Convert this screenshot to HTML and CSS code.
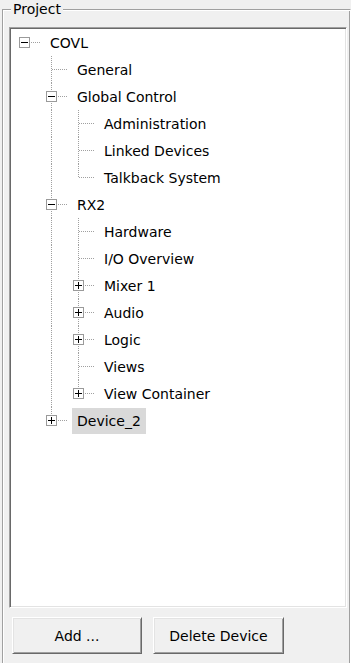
FILE: index.html
```html
<!DOCTYPE html>
<html>
<head>
<meta charset="utf-8">
<title>Project</title>
<link rel="stylesheet" href="styles.css">
</head>
<body>
<div class="group">
  <span class="group-title">Project</span>
  <div class="tree">
    <div class="row"><span class="col own root"><i class="box minus"></i></span><span class="label">COVL</span></div>
    <div class="row"><span class="col"></span><span class="col own mid"></span><span class="label">General</span></div>
    <div class="row"><span class="col"></span><span class="col own mid"><i class="box minus"></i></span><span class="label">Global Control</span></div>
    <div class="row"><span class="col"></span><span class="col v"></span><span class="col own mid"></span><span class="label">Administration</span></div>
    <div class="row"><span class="col"></span><span class="col v"></span><span class="col own mid"></span><span class="label">Linked Devices</span></div>
    <div class="row"><span class="col"></span><span class="col v"></span><span class="col own last"></span><span class="label">Talkback System</span></div>
    <div class="row"><span class="col"></span><span class="col own mid"><i class="box minus"></i></span><span class="label">RX2</span></div>
    <div class="row"><span class="col"></span><span class="col v"></span><span class="col own mid"></span><span class="label">Hardware</span></div>
    <div class="row"><span class="col"></span><span class="col v"></span><span class="col own mid"></span><span class="label">I/O Overview</span></div>
    <div class="row"><span class="col"></span><span class="col v"></span><span class="col own mid"><i class="box plus"></i></span><span class="label">Mixer 1</span></div>
    <div class="row"><span class="col"></span><span class="col v"></span><span class="col own mid"><i class="box plus"></i></span><span class="label">Audio</span></div>
    <div class="row"><span class="col"></span><span class="col v"></span><span class="col own mid"><i class="box plus"></i></span><span class="label">Logic</span></div>
    <div class="row"><span class="col"></span><span class="col v"></span><span class="col own mid"></span><span class="label">Views</span></div>
    <div class="row"><span class="col"></span><span class="col v"></span><span class="col own last"><i class="box plus"></i></span><span class="label">View Container</span></div>
    <div class="row"><span class="col"></span><span class="col own last"><i class="box plus"></i></span><span class="label selected">Device_2</span></div>
  </div>
  <div class="buttons">
    <button class="btn btn-add">Add ...</button>
    <button class="btn btn-delete">Delete Device</button>
  </div>
</div>
</body>
</html>
```
FILE: styles.css
```css
html, body {
  margin: 0;
  padding: 0;
  background: #f0f0f0;
  overflow: hidden;
}
body {
  width: 351px;
  height: 663px;
  font-family: "DejaVu Sans", "Liberation Sans", sans-serif;
  font-size: 14px;
  color: #000;
}
.group {
  position: relative;
  box-sizing: border-box;
  margin: 9px 0 0 2px;
  width: 349px;
  height: 680px;
  border-style: solid;
  border-width: 1px;
  border-color: #a0a0a0 #fff #fff #a0a0a0;
  box-shadow: inset 1px 1px 0 #fff, inset -1px -1px 0 #a0a0a0;
  padding: 1px 3px 0 5px;
}
.group-title {
  position: absolute;
  top: -10px;
  left: 8px;
  padding: 0 2px;
  line-height: 18px;
  background: #f0f0f0;
}
.tree {
  box-sizing: border-box;
  margin: 16px 0 0 1px;
  width: 338px;
  height: 581px;
  background: #fff;
  border-style: solid;
  border-width: 1px;
  border-color: #a0a0a0 #fff #fff #a0a0a0;
  box-shadow: inset 1px 1px 0 #696969, inset -1px -1px 0 #e3e3e3;
  padding: 1px 0 0 1px;
}
.row {
  display: flex;
  align-items: center;
  height: 27px;
}
.col {
  position: relative;
  flex: none;
  width: 27px;
  height: 27px;
}
.col.v::before,
.own.mid::before,
.own.last::before {
  content: "";
  position: absolute;
  left: 13px;
  top: 0;
  width: 1px;
  height: 27px;
  background: repeating-linear-gradient(to bottom, #a0a0a0 0 1px, transparent 1px 2px);
}
.own.last::before {
  height: 14px;
}
.own::after {
  content: "";
  position: absolute;
  left: 14px;
  top: 13px;
  width: 15px;
  height: 1px;
  background: repeating-linear-gradient(to right, #a0a0a0 0 1px, transparent 1px 2px);
}
.box {
  position: absolute;
  z-index: 1;
  left: 8px;
  top: 8px;
  box-sizing: border-box;
  width: 11px;
  height: 11px;
  border: 1px solid #9a9a9a;
  background: #fff;
}
.box::before {
  content: "";
  position: absolute;
  left: 1px;
  top: 4px;
  width: 7px;
  height: 1px;
  background: #000;
}
.box.plus::after {
  content: "";
  position: absolute;
  left: 4px;
  top: 1px;
  width: 1px;
  height: 7px;
  background: #000;
}
.label {
  margin-left: 7px;
  padding: 0 5px;
  line-height: 26px;
  white-space: nowrap;
}
.label.selected {
  background: #d9d9d9;
}
.buttons {
  display: flex;
  gap: 11px;
  margin: 9px 0 0 4px;
}
.btn {
  box-sizing: border-box;
  height: 37px;
  margin: 0;
  padding: 0;
  font-family: "DejaVu Sans", "Liberation Sans", sans-serif;
  font-size: 14px;
  color: #000;
  background: #f0f0f0;
  border-style: solid;
  border-width: 1px;
  border-color: #fff #696969 #696969 #fff;
  box-shadow: inset 1px 1px 0 #e3e3e3, inset -1px -1px 0 #a0a0a0;
  border-radius: 0;
}
.btn-add {
  width: 130px;
}
.btn-delete {
  width: 131px;
}
```
